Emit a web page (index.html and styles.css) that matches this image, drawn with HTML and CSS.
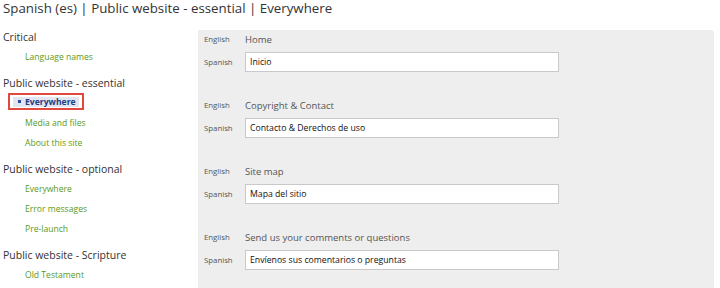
FILE: index.html
```html
<!DOCTYPE html>
<html>
<head>
<meta charset="utf-8">
<link rel="stylesheet" href="styles.css">
</head>
<body>
<h1 class="title">Spanish (es) | Public website - essential | Everywhere</h1>
<div class="layout">
  <nav class="sidebar">
    <div class="section">
      <h2 class="heading">Critical</h2>
      <ul class="items">
        <li class="item">Language names</li>
      </ul>
    </div>
    <div class="section">
      <h2 class="heading">Public website - essential</h2>
      <ul class="items">
        <li class="item item-active"><span class="active-box"><span class="active-fill"><span class="bullet"></span>Everywhere</span></span></li>
        <li class="item">Media and files</li>
        <li class="item">About this site</li>
      </ul>
    </div>
    <div class="section">
      <h2 class="heading">Public website - optional</h2>
      <ul class="items">
        <li class="item">Everywhere</li>
        <li class="item">Error messages</li>
        <li class="item">Pre-launch</li>
      </ul>
    </div>
    <div class="section">
      <h2 class="heading">Public website - Scripture</h2>
      <ul class="items">
        <li class="item">Old Testament</li>
      </ul>
    </div>
  </nav>
  <main class="panel">
    <div class="group">
      <div class="row row-en"><span class="lang">English</span><span class="source">Home</span></div>
      <div class="row row-es"><span class="lang">Spanish</span><div class="field">Inicio</div></div>
    </div>
    <div class="group">
      <div class="row row-en"><span class="lang">English</span><span class="source">Copyright &amp; Contact</span></div>
      <div class="row row-es"><span class="lang">Spanish</span><div class="field">Contacto &amp; Derechos de uso</div></div>
    </div>
    <div class="group">
      <div class="row row-en"><span class="lang">English</span><span class="source">Site map</span></div>
      <div class="row row-es"><span class="lang">Spanish</span><div class="field">Mapa del sitio</div></div>
    </div>
    <div class="group">
      <div class="row row-en"><span class="lang">English</span><span class="source">Send us your comments or questions</span></div>
      <div class="row row-es"><span class="lang">Spanish</span><div class="field">Envíenos sus comentarios o preguntas</div></div>
    </div>
  </main>
</div>
</body>
</html>
```
FILE: styles.css
```css
* { box-sizing: border-box; }
html, body {
  margin: 0;
  padding: 0;
  background: #fff;
  font-family: "Open Sans", "Noto Sans", sans-serif;
  overflow: hidden;
}
.title {
  margin: -1px 0 13px 3px;
  font-size: 13.3px;
  line-height: 18px;
  font-weight: 400;
  color: #333;
}
.layout {
  display: flex;
  height: 258px;
}
.sidebar {
  width: 198px;
  flex: none;
}
.section + .section { margin-top: 9px; }
.heading {
  margin: 0 0 0 3px;
  font-size: 10.5px;
  line-height: 14px;
  font-weight: 400;
  color: #333;
}
.items {
  list-style: none;
  margin: 0;
  padding: 3px 0 0 0;
}
.item {
  height: 20px;
  line-height: 20px;
  padding-left: 25px;
  font-size: 8.6px;
  color: #5b9a22;
}
.item-active {
  padding-left: 8px;
  display: flex;
  align-items: center;
}
.active-box {
  display: flex;
  align-items: center;
  width: 76px;
  height: 17px;
  margin-top: -3px;
  border: 2px solid #e2493e;
  padding: 0 3px;
}
.active-fill {
  display: flex;
  align-items: center;
  flex: 1;
  height: 10px;
  background: #e1e6f1;
  color: #223c86;
  font-weight: 700;
  line-height: 10px;
  padding-left: 5px;
}
.bullet {
  width: 3px;
  height: 3px;
  background: #2c4aa0;
  margin-right: 4px;
}
.panel {
  width: 516px;
  flex: none;
  background: #eeeeee;
  border-top-right-radius: 3px;
  padding-left: 6px;
}
.group { margin-bottom: 24px; }
.row {
  display: flex;
  align-items: center;
}
.row-en { height: 18px; margin-bottom: 4px; }
.row-es { height: 20px; }
.lang {
  width: 41px;
  flex: none;
  font-size: 7.8px;
  color: #555;
}
.source {
  font-size: 9.5px;
  color: #555;
}
.field {
  width: 314px;
  height: 20px;
  background: #fff;
  border: 1px solid #c9c9c9;
  font-size: 8.7px;
  line-height: 18px;
  padding-left: 4px;
  color: #111;
}
```
